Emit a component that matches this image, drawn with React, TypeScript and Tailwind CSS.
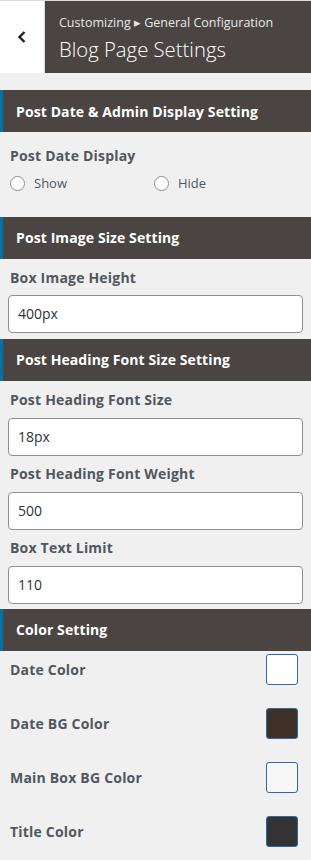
import React from "react";

const font = { fontFamily: '"Open Sans", "Noto Sans", sans-serif' };

function SectionHeader({ title }: { title: string }) {
  return (
    <div className="h-[42px] bg-[#4a4542] border-l-[3px] border-[#0073aa] flex items-center pl-[13px]">
      <span className="text-white font-bold text-[14px] tracking-[0.1px]">{title}</span>
    </div>
  );
}

function Label({ children }: { children: React.ReactNode }) {
  return <div className="text-[#50575e] font-bold text-[14px] leading-[20px] tracking-[0.2px]">{children}</div>;
}

function TextInput({ value }: { value: string }) {
  return (
    <div className="h-[38px] bg-white border border-[#8c8f94] rounded-[4px] flex items-center px-[9px] text-[14px] text-[#2c3338]">
      {value}
    </div>
  );
}

function Radio({ label }: { label: string }) {
  return (
    <div className="flex items-center gap-[9px]">
      <span className="w-[15px] h-[15px] rounded-full border border-[#8c8f94] bg-white" />
      <span className="text-[13px] text-[#50575e]">{label}</span>
    </div>
  );
}

function ColorRow({ label, color }: { label: string; color: string }) {
  return (
    <div className="h-[54px] flex items-center justify-between pl-[10px] pr-[13px]">
      <Label>{label}</Label>
      <span
        className="w-[32px] h-[31px] rounded-[3px] border border-[#2d6ba8]"
        style={{ backgroundColor: color }}
      />
    </div>
  );
}

export default function App() {
  return (
    <div className="w-[311px] h-[860px] bg-[#f0f0f1] overflow-hidden" style={font}>
      <div className="h-[1px] bg-[#dcdcde]" />
      <div className="h-[72px] flex">
        <div className="w-[45px] bg-white flex items-center justify-center border-r border-[#dcdcde]">
          <svg width="10" height="14" viewBox="0 0 10 14">
            <path d="M7.5 2 L2.5 7 L7.5 12" fill="none" stroke="#1d2327" strokeWidth="2.4" />
          </svg>
        </div>
        <div className="flex-1 bg-[#4a4542] pl-[14px] pt-[12px]">
          <div className="text-[12.5px] text-[#e8e8e8] leading-[20px]">Customizing ▸ General Configuration</div>
          <div className="text-[20.3px] text-white font-light leading-[30px] mt-[1px]">Blog Page Settings</div>
        </div>
      </div>
      <div className="h-[17px]" />
      <SectionHeader title="Post Date & Admin Display Setting" />
      <div className="px-[10px] pt-[14px] pb-[23px]">
        <Label>Post Date Display</Label>
        <div className="flex mt-[8px]">
          <div className="w-[144px]"><Radio label="Show" /></div>
          <Radio label="Hide" />
        </div>
      </div>
      <SectionHeader title="Post Image Size Setting" />
      <div className="px-[8px] pt-[9px] pb-[6px]">
        <div className="pl-[2px] mb-[7px]"><Label>Box Image Height</Label></div>
        <TextInput value="400px" />
      </div>
      <SectionHeader title="Post Heading Font Size Setting" />
      <div className="px-[8px] pt-[9px] pb-[5px]">
        <div className="pl-[2px] mb-[8px]"><Label>Post Heading Font Size</Label></div>
        <TextInput value="18px" />
        <div className="pl-[2px] mt-[8px] mb-[8px]"><Label>Post Heading Font Weight</Label></div>
        <TextInput value="500" />
        <div className="pl-[2px] mt-[8px] mb-[8px]"><Label>Box Text Limit</Label></div>
        <TextInput value="110" />
      </div>
      <SectionHeader title="Color Setting" />
      <div className="mt-[-8px]">
        <ColorRow label="Date Color" color="#ffffff" />
        <ColorRow label="Date BG Color" color="#3e3026" />
        <ColorRow label="Main Box BG Color" color="#f6f6f6" />
        <ColorRow label="Title Color" color="#333333" />
      </div>
    </div>
  );
}
